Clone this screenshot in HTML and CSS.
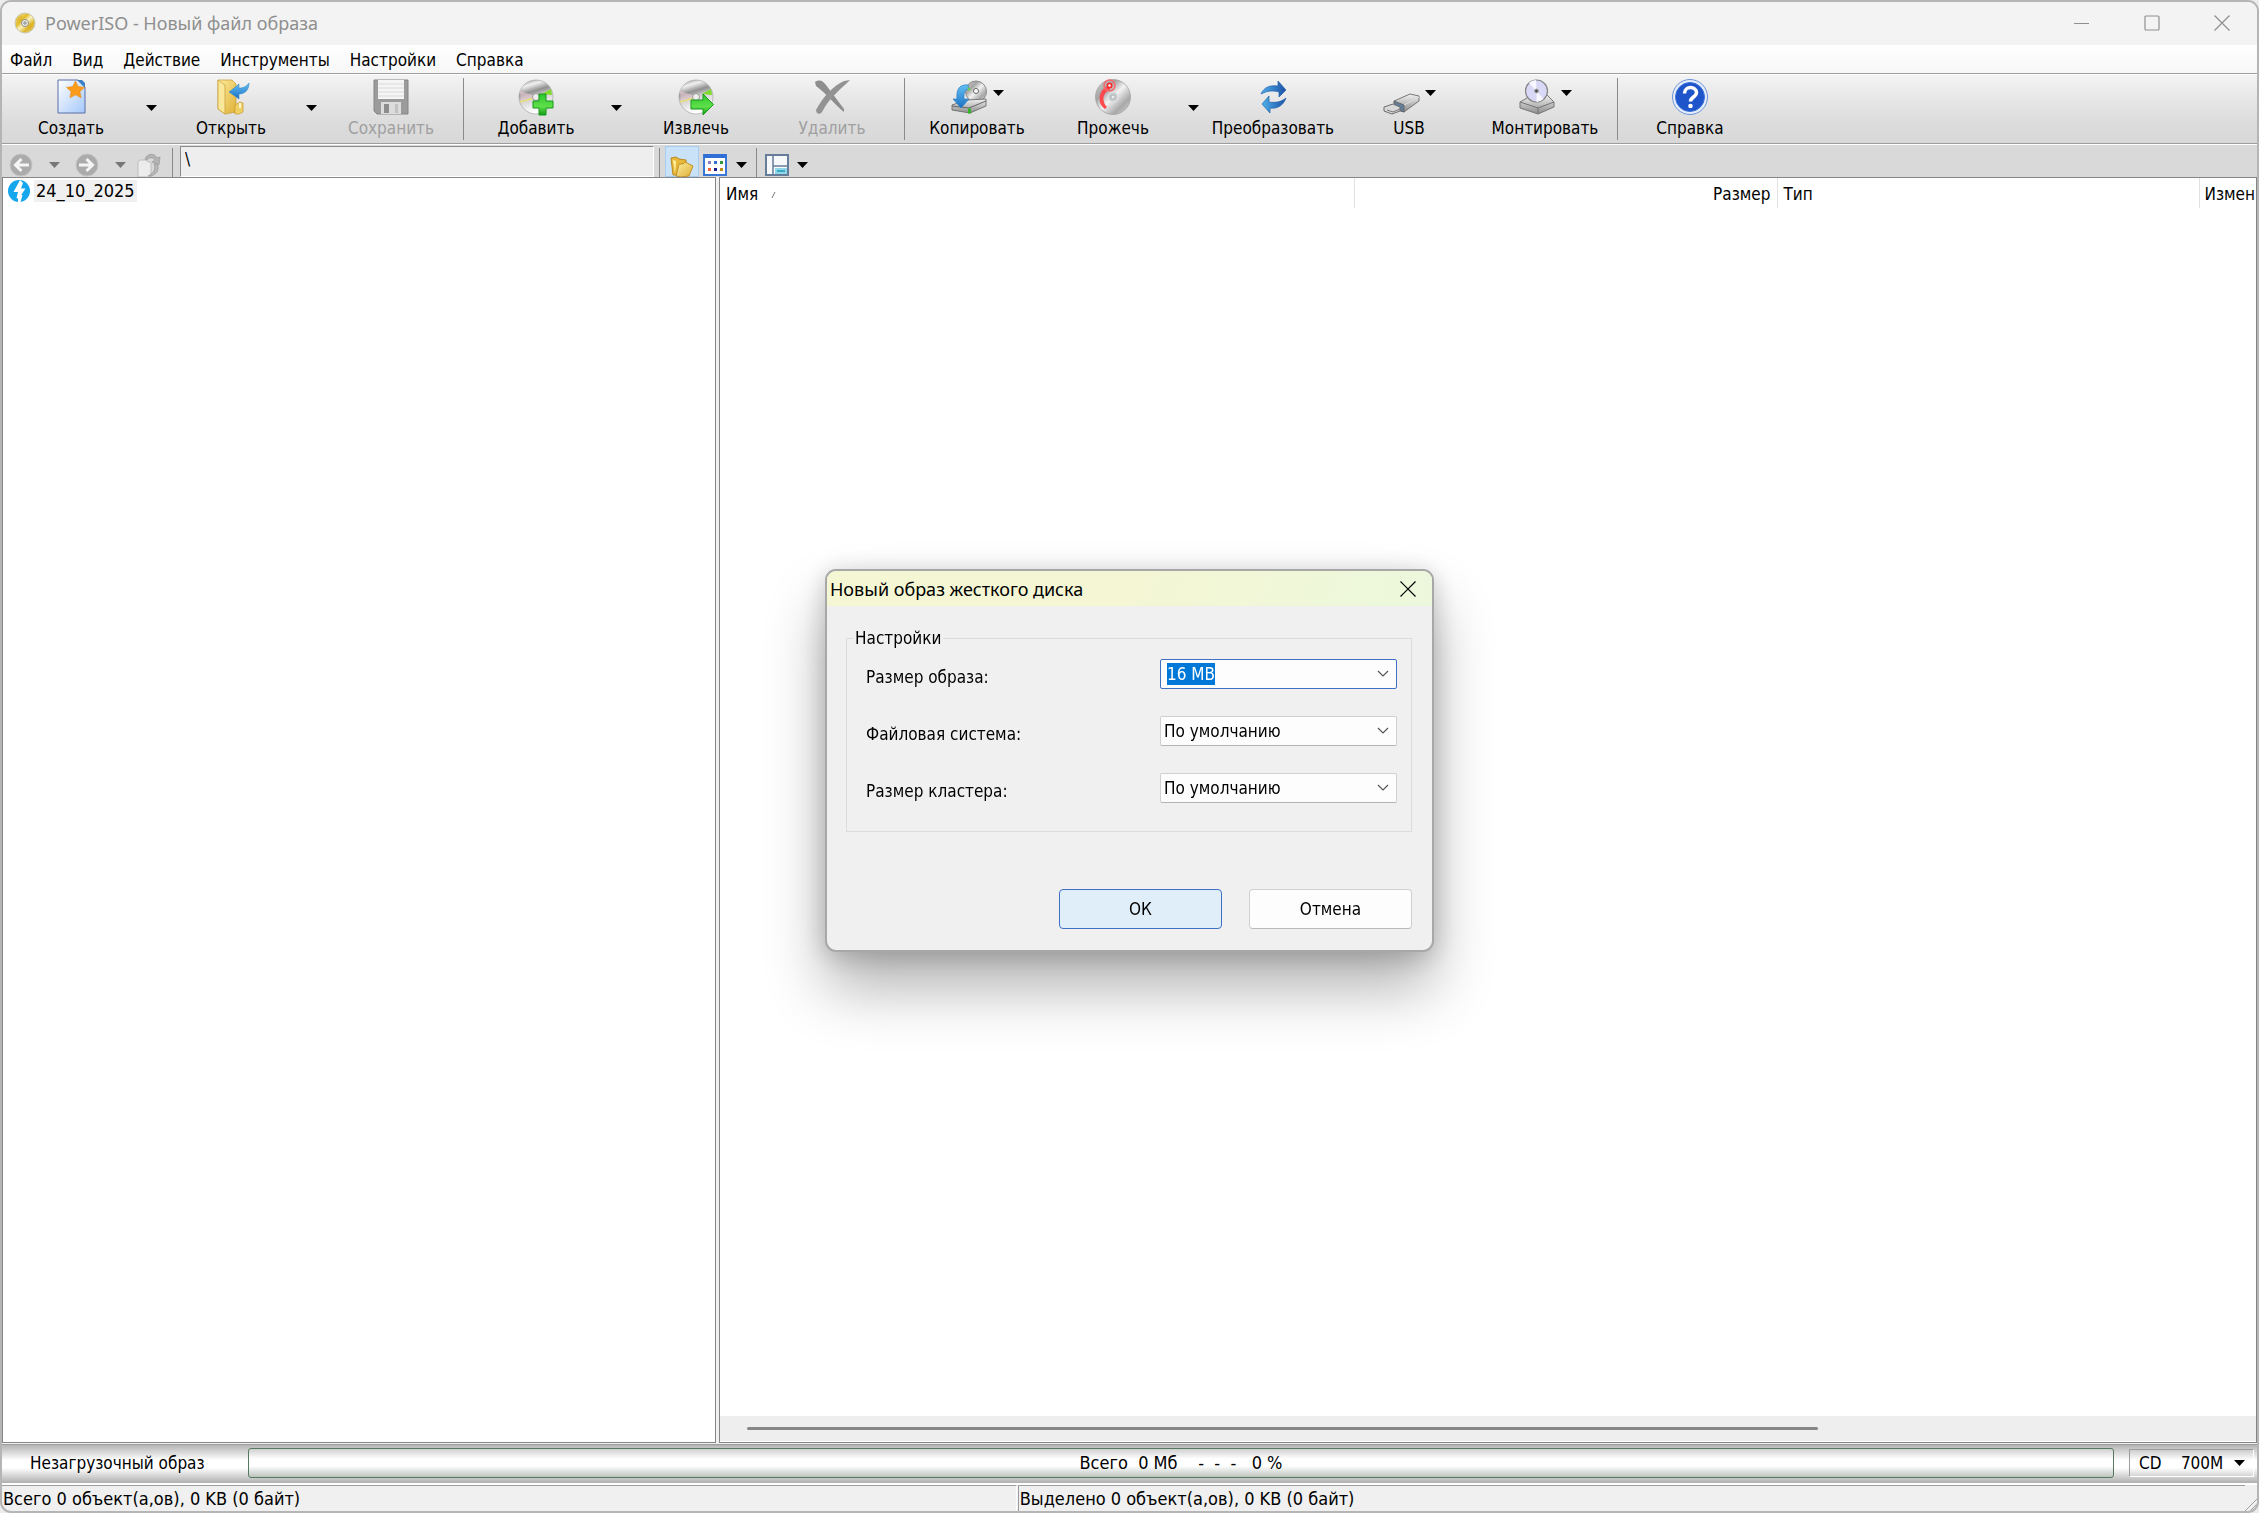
FILE: index.html
```html
<!DOCTYPE html>
<html lang="ru">
<head>
    <meta charset="UTF-8" />
    <meta name="viewport" content="width=device-width, initial-scale=1" />
    <title>PowerISO - Новый файл образа</title>
    <link rel="stylesheet" href="styles.css">
</head>
<body>
    <!-- Shared gradients and the small drop-down triangle -->
    <svg class="defs" aria-hidden="true">
        <defs>
            <linearGradient id="disc" x1="0" y1="0" x2="1" y2="1">
                <stop offset="0" stop-color="#d8d8d8" />
                <stop offset=".3" stop-color="#a4a4a4" />
                <stop offset=".5" stop-color="#f2f2f2" />
                <stop offset=".75" stop-color="#a8a8a8" />
                <stop offset="1" stop-color="#dcdcdc" />
            </linearGradient>
            <linearGradient id="cd" x1="0" y1="0" x2=".3" y2="1">
                <stop offset="0" stop-color="#8c8c8c" />
                <stop offset=".22" stop-color="#f0f0f0" />
                <stop offset=".42" stop-color="#909090" />
                <stop offset=".6" stop-color="#d6d2d4" />
                <stop offset="1" stop-color="#ffffff" />
            </linearGradient>
            <linearGradient id="gold" x1="0" y1="0" x2="1" y2="1">
                <stop offset="0" stop-color="#f4f0c8" />
                <stop offset=".35" stop-color="#e3bc2c" />
                <stop offset=".5" stop-color="#faf3c0" />
                <stop offset=".7" stop-color="#dcb52a" />
                <stop offset="1" stop-color="#f0ecd0" />
            </linearGradient>
            <linearGradient id="folder" x1="0" y1="0" x2="1" y2="1">
                <stop offset="0" stop-color="#fdeea0" />
                <stop offset="1" stop-color="#dfaf35" />
            </linearGradient>
            <linearGradient id="blue" x1="0" y1="0" x2="0" y2="1">
                <stop offset="0" stop-color="#63c0f5" />
                <stop offset="1" stop-color="#1a70c4" />
            </linearGradient>
            <linearGradient id="navy" x1="0" y1="0" x2="1" y2="0">
                <stop offset="0" stop-color="#4fb0ea" />
                <stop offset="1" stop-color="#1c50a6" />
            </linearGradient>
            <linearGradient id="page" x1="0" y1="0" x2="1" y2="1">
                <stop offset="0" stop-color="#ffffff" />
                <stop offset="1" stop-color="#a4c8fa" />
            </linearGradient>
            <linearGradient id="green" x1="0" y1="0" x2="0" y2="1">
                <stop offset="0" stop-color="#2cc42c" />
                <stop offset=".6" stop-color="#5fe04a" />
                <stop offset="1" stop-color="#139a17" />
            </linearGradient>
            <linearGradient id="metal" x1="0" y1="0" x2="0" y2="1">
                <stop offset="0" stop-color="#f2f2f2" />
                <stop offset="1" stop-color="#8b8b8b" />
            </linearGradient>
            <symbol id="tri" viewBox="0 0 11 6"><path d="M0 0h11L5.500 6z" fill="currentColor" /></symbol>
            <symbol id="chev" viewBox="0 0 12 8"><path d="M1 1l5 5 5-5" fill="none" stroke="currentColor" stroke-width="1.200" /></symbol>
        </defs>
    </svg>

    <div class="window">
        <header class="titlebar">
            <svg class="app-icon" viewBox="0 0 22 22">
                <circle cx="11" cy="11" r="10" fill="url(#gold)" stroke="#c9c7b4" />
                <path d="M2 8a10 10 0 0 1 5-5l3 5-4 3zM20 14a10 10 0 0 1-5 5l-3-5 4-3z" fill="#d9ad1c" opacity=".5" />
                <circle cx="11" cy="11" r="3.500" fill="#f1f1ee" stroke="#8e8e86" />
                <circle cx="11" cy="11" r="1.200" fill="#fff" stroke="#777" />
            </svg>
            <h1 class="title">PowerISO - Новый файл образа</h1>
            <div class="window-controls">
                <button aria-label="Свернуть"><svg viewBox="0 0 16 16"><path d="M0 8.500h15" /></svg></button>
                <button aria-label="Развернуть"><svg viewBox="0 0 16 16"><rect x="1" y="1" width="14" height="14" rx="1" /></svg></button>
                <button aria-label="Закрыть"><svg viewBox="0 0 16 16"><path d="M.5.5l15 15M15.500.5l-15 15" /></svg></button>
            </div>
        </header>

        <nav class="menubar">
            <button>Файл</button>
            <button>Вид</button>
            <button>Действие</button>
            <button>Инструменты</button>
            <button>Настройки</button>
            <button>Справка</button>
        </nav>

        <div class="toolbar">
            <button class="tool">
                <svg class="icon" viewBox="0 0 36 36">
                    <path d="M5 1h20l7 7v26H5z" fill="url(#page)" stroke="#5a6ea8" />
                    <path d="M24 1l8 8v-5l-3-3z" fill="#3b7fc4" />
                    <path d="M22.500 2l2.700 5.600 6.300.8-4.600 4.200 1.200 6.200-5.600-3-5.500 3 1.100-6.200-4.600-4.200 6.200-.8z" fill="#fb9b1b" stroke="#e98a10" stroke-width=".6" />
                </svg>
                Создать
            </button>
            <button class="drop" aria-label="Создать: варианты"><svg class="tri"><use href="#tri" /></svg></button>
            <button class="tool">
                <svg class="icon" viewBox="0 0 36 36">
                    <path d="M5 1l14 0 4 4v28l-11 2-7-5z" fill="url(#folder)" stroke="#c79a30" stroke-width=".7" />
                    <path d="M5 1l7 5v29l-7-5z" fill="#f9e79a" stroke="#c79a30" stroke-width=".7" />
                    <path d="M22 26l5-3 3 1v9l-4 2h-4z" fill="#f0cf62" stroke="#c79a30" stroke-width=".7" />
                    <path d="M27 24v5" stroke="#fff" stroke-width="1.500" />
                    <path d="M36 4c0 7-4 11-10 11v5L16 13l10-8v4c4 0 7-1 10-5z" fill="url(#blue)" stroke="#2c83bd" stroke-width=".5" />
                </svg>
                Открыть
            </button>
            <button class="drop" aria-label="Открыть: варианты"><svg class="tri"><use href="#tri" /></svg></button>
            <button class="tool" disabled>
                <svg class="icon" viewBox="0 0 36 36">
                    <path d="M1 1h34v34H4l-3-3z" fill="#9b9b9b" stroke="#858585" />
                    <path d="M5 1h26v19H5z" fill="#f5f5f5" />
                    <path d="M5 5h26M5 9h26M5 13h26M5 17h26" stroke="#d9d9d9" />
                    <path d="M8 23h20v12H8z" fill="#dcdcdc" />
                    <path d="M11 25h5v9h-5z" fill="#8d8d8d" />
                    <path d="M22 25h3v9h-3z" fill="#c1c1c1" />
                </svg>
                Сохранить
            </button>
            <span class="sep"></span>
            <button class="tool">
                <svg class="icon" viewBox="0 0 36 36">
                    <circle cx="18" cy="18" r="17" fill="url(#cd)" stroke="#a5a5a5" stroke-width=".7" />
                    <path d="M2 12l15 5-14 7z" fill="#e9cbd6" opacity=".6" />
                    <path d="M2 23l14-4" stroke="#e6e070" stroke-width="1.500" />
                    <path d="M33 10l-9 5 10 1z" fill="#7fdc2c" />
                    <circle cx="18" cy="18" r="3.500" fill="#eee" stroke="#999" />
                    <path d="M21 15h7v7h7v7h-7v7h-7v-7h-6v-7h6z" fill="url(#green)" stroke="#179a1c" />
                </svg>
                Добавить
            </button>
            <button class="drop" aria-label="Добавить: варианты"><svg class="tri"><use href="#tri" /></svg></button>
            <button class="tool">
                <svg class="icon" viewBox="0 0 36 36">
                    <circle cx="18" cy="18" r="17" fill="url(#cd)" stroke="#a5a5a5" stroke-width=".7" />
                    <path d="M2 12l15 5-14 7z" fill="#e9cbd6" opacity=".6" />
                    <path d="M2 23l14-4" stroke="#e6e070" stroke-width="1.500" />
                    <path d="M33 10l-9 5 10 1z" fill="#7fdc2c" />
                    <circle cx="18" cy="18" r="3.500" fill="#eee" stroke="#999" />
                    <path d="M13 21h12v-6l10.500 10.500L25 36v-6H13z" fill="url(#green)" stroke="#179a1c" />
                </svg>
                Извлечь
            </button>
            <button class="tool" disabled>
                <svg class="icon" viewBox="0 0 36 36">
                    <path d="M1 3c5-3 8-1 11 3l18 24v3C22 27 13 15 2 7z" fill="#8e8e8e" />
                    <path d="M36 1C26 11 16 18 8 33c-2 3-6 2-6-2C8 19 20 6 30 2z" fill="#939393" />
                </svg>
                Удалить
            </button>
            <span class="sep"></span>
            <button class="tool">
                <span class="icon-row">
                    <svg class="icon" viewBox="0 0 36 36">
                        <circle cx="25" cy="12.500" r="10.500" fill="url(#disc)" stroke="#8a8a8a" />
                        <circle cx="25" cy="12" r="2.500" fill="#fff" stroke="#666" />
                        <path d="M1 26l15-5 19-1v7l-16 7-18-3z" fill="url(#metal)" stroke="#777" />
                        <path d="M1 27l17 2 17-7" fill="none" stroke="#666" />
                        <path d="M17 29.500h3v5h-3z" fill="#35b527" />
                        <path d="M17 6C9 5 5 10 6 20H2l8 9 8-9h-5c0-6 0-9 5-10z" fill="url(#blue)" stroke="#2f7fc0" stroke-width=".7" />
                        <path d="M16 8l4 2-2 2z" fill="#62d343" />
                    </svg>
                    <svg class="tri"><use href="#tri" /></svg>
                </span>
                Копировать
            </button>
            <button class="tool">
                <svg class="icon" viewBox="0 0 36 36">
                    <circle cx="18" cy="18" r="17.500" fill="url(#disc)" stroke="#a2a2a2" stroke-width=".8" />
                    <circle cx="18" cy="18" r="5" fill="#c6cdd1" stroke="#e8e8e8" />
                    <circle cx="18" cy="18" r="2" fill="#eee" stroke="#999" stroke-width=".6" />
                    <path d="M14 7C4 9 1 24 10 30l2-2C6 22 8 13 15 11z" fill="#fb4a4d" />
                    <circle cx="14.500" cy="6.500" r="5.500" fill="none" stroke="#f86a6c" stroke-width="1.500" />
                    <circle cx="14.500" cy="6.500" r="3" fill="#fb2b2e" />
                    <circle cx="14.500" cy="6.500" r="1.200" fill="#fff" />
                </svg>
                Прожечь
            </button>
            <button class="drop" aria-label="Прожечь: варианты"><svg class="tri"><use href="#tri" /></svg></button>
            <button class="tool">
                <svg class="icon" viewBox="0 0 36 36">
                    <path d="M6 15C9 8 15 6 23 7V2l8 9-7 7v-5c-7-2-12-1-18 2z" fill="url(#navy)" stroke="#2262ac" stroke-width=".7" />
                    <path d="M31 19c-3 8-9 11-16 10v5l-8-9 7-8v6c7 1 12 0 17-4z" fill="url(#navy)" stroke="#2262ac" stroke-width=".7" />
                </svg>
                Преобразовать
            </button>
            <button class="tool">
                <span class="icon-row">
                    <svg class="icon" viewBox="0 0 36 36">
                        <path d="M11 22L27 15l9 2v5l-15 11-9-3z" fill="url(#metal)" stroke="#777" />
                        <path d="M12 23l9 3 15-8" fill="none" stroke="#dedede" />
                        <path d="M11 22l10 4v7l-9-3z" fill="#5f7f9c" stroke="#666" />
                        <path d="M1 28l9-3 7 3v4l-8 3-8-3z" fill="#d9d9d9" stroke="#6d6d6d" />
                        <path d="M4 31l6 2 7-3" fill="none" stroke="#777" />
                    </svg>
                    <svg class="tri"><use href="#tri" /></svg>
                </span>
                USB
            </button>
            <button class="tool">
                <span class="icon-row">
                    <svg class="icon" viewBox="0 0 36 36">
                        <path d="M1 23l12-7h15l7 7v5L19 35 1 29z" fill="url(#metal)" stroke="#777" />
                        <path d="M1 23l18 6 16-6M19 29v6" fill="none" stroke="#747474" />
                        <circle cx="17.500" cy="12" r="11" fill="#d9d8f6" stroke="#858585" stroke-width="1.200" />
                        <path d="M17.500 12L10 4a11 11 0 0 1 7-3zM17.500 12l7 8a11 11 0 0 1-7 3z" fill="#f7f7ff" />
                        <circle cx="17.500" cy="12" r="2" fill="#555" stroke="#aaa" />
                    </svg>
                    <svg class="tri"><use href="#tri" /></svg>
                </span>
                Монтировать
            </button>
            <span class="sep"></span>
            <button class="tool">
                <svg class="icon" viewBox="0 0 36 36">
                    <circle cx="18" cy="18" r="17.500" fill="#e6eefb" stroke="#6c93d6" />
                    <circle cx="18" cy="18" r="14.500" fill="#1f55cb" stroke="#3c74d8" />
                    <path d="M12.500 14.500c0-8 12-7.500 12-1 0 4.500-6 4.500-6 9" fill="none" stroke="#fff" stroke-width="3.500" />
                    <circle cx="18.500" cy="27" r="2.300" fill="#fff" />
                </svg>
                Справка
            </button>
        </div>

        <div class="navbar">
            <button class="nav-btn" aria-label="Назад" disabled>
                <svg viewBox="0 0 24 24"><circle cx="12" cy="12" r="11" fill="#ababab" stroke="#c4c4c4" /><path d="M20 12H7m5.500-6l-6 6 6 6" fill="none" stroke="#f5f5f5" stroke-width="3" /></svg>
            </button>
            <button class="nav-drop" aria-label="История назад" disabled><svg class="tri"><use href="#tri" /></svg></button>
            <button class="nav-btn" aria-label="Вперёд" disabled>
                <svg viewBox="0 0 24 24"><circle cx="12" cy="12" r="11" fill="#ababab" stroke="#c4c4c4" /><path d="M4 12h13m-5.500-6l6 6-6 6" fill="none" stroke="#f5f5f5" stroke-width="3" /></svg>
            </button>
            <button class="nav-drop" aria-label="История вперёд" disabled><svg class="tri"><use href="#tri" /></svg></button>
            <button class="nav-btn small" aria-label="Вверх" disabled>
                <svg viewBox="0 0 24 24"><path d="M1 9l2-2h6l2 2h3v15H1z" fill="#ececec" stroke="#bdbdbd" /><path d="M8 6c2-5 9-7 12-1l3-1-1 8-7-3 3-2c-2-3-6-3-8 0z" fill="#b4b4b4" stroke="#989898" stroke-width=".7" /><path d="M20 11c3 5 0 10-6 12h-3c6-3 8-7 6-12z" fill="#b8b8b8" stroke="#989898" stroke-width=".7" /></svg>
            </button>
            <span class="sep wide"></span>
            <input class="path" type="text" aria-label="Путь" value="\" />
            <span class="sep"></span>
            <button class="nav-btn toggle" aria-label="Папки" aria-pressed="true">
                <svg viewBox="0 0 24 24"><path d="M1 3l5-1 3 2 7 1v15H3z" fill="#e9b93a" stroke="#b98a1e" /><path d="M6 21l3-12h4l2-2 8 4-4 10-8 1z" fill="url(#folder)" stroke="#bf9128" /><path d="M3 5l3 1-1 12z" fill="#fff0a4" /></svg>
            </button>
            <button class="nav-btn" aria-label="Вид списка">
                <svg viewBox="0 0 24 24"><rect x="1" y="2" width="22" height="20" fill="#fff" stroke="#3a77d4" stroke-width="2" /><path d="M1 1h22v4H1z" fill="#2f6fd6" /><path d="M5 8h3v3H5z" fill="#8a7fc0" /><path d="M11 8h3v3h-3z" fill="#2f6fd0" /><path d="M17 8h3v3h-3z" fill="#2d9a36" /><path d="M5 15h3v3H5z" fill="#f0623c" /><path d="M11 15h3v3h-3z" fill="#151a8c" /><path d="M17 15h3v3h-3z" fill="#c08a18" /></svg>
            </button>
            <button class="nav-drop small" aria-label="Варианты вида"><svg class="tri"><use href="#tri" /></svg></button>
            <span class="sep"></span>
            <button class="nav-btn small" aria-label="Панели">
                <svg viewBox="0 0 24 24"><rect x="1" y="2" width="22" height="20" fill="#f6f8fa" stroke="#667d99" stroke-width="2" /><path d="M8 2v20M8 13h15" stroke="#667d99" stroke-width="1.500" /><path d="M10 15h12v6H10z" fill="#8ed8ea" /><path d="M12 18h8" stroke="#3fa7c6" stroke-width="2" /></svg>
            </button>
            <button class="nav-drop small" aria-label="Варианты панелей"><svg class="tri"><use href="#tri" /></svg></button>
        </div>

        <main class="panes">
            <section class="pane tree">
                <button class="tree-item">
                    <svg viewBox="0 0 22 22"><circle cx="11" cy="11" r="11" fill="#14a7ee" /><path d="M12 0L5.500 12H10L8.500 18l2 1L17.500 8.500H13L15 3z" fill="#fff" /><path d="M12.500 22l2-7h-1.500l-3 4v3z" fill="#fff" /></svg>
                    <span>24_10_2025</span>
                </button>
            </section>
            <section class="pane files">
                <table class="file-table">
                    <thead>
                        <tr>
                            <th class="col-name">Имя <svg class="sort" viewBox="0 0 6 8"><path d="M1 7l3-6" stroke="#777" fill="none" /></svg></th>
                            <th class="col-size">Размер</th>
                            <th class="col-type">Тип</th>
                            <th class="col-date">Измен</th>
                        </tr>
                    </thead>
                </table>
                <div class="scrollbar"><div class="thumb"></div></div>
            </section>
        </main>

        <div class="infobar">
            <span class="boot">Незагрузочный образ</span>
            <div class="capacity">Всего  0 Мб    -  -  -   0 %</div>
            <div class="media">
                <select aria-label="Тип носителя">
                    <option>CD&nbsp;&nbsp;&nbsp; 700M</option>
                </select>
                <svg class="tri"><use href="#tri" /></svg>
            </div>
        </div>

        <footer class="statusbar">
            <div class="status total">Всего 0 объект(а,ов), 0 KB (0 байт)</div>
            <div class="status selected">Выделено 0 объект(а,ов), 0 KB (0 байт)</div>
            <svg class="grip" viewBox="0 0 12 12"><path d="M0 12L12 0M5 12l7-7" stroke="#a0a0a0" fill="none" /></svg>
        </footer>
    </div>

    <!-- New hard disk image dialog -->
    <div class="overlay">
        <form class="dialog" role="dialog" aria-labelledby="dialog-title">
            <div class="dialog-title">
                <h2 id="dialog-title">Новый образ жесткого диска</h2>
                <button type="button" aria-label="Закрыть"><svg viewBox="0 0 16 16"><path d="M.5.5l15 15M15.500.5l-15 15" /></svg></button>
            </div>
            <div class="dialog-body">
                <fieldset>
                    <legend>Настройки</legend>
                    <div class="field">
                        <label for="size">Размер образа:</label>
                        <div class="combo focused">
                            <input type="text" id="size" value="16 MB" />
                            <svg class="chev"><use href="#chev" /></svg>
                        </div>
                    </div>
                    <div class="field">
                        <label for="fs">Файловая система:</label>
                        <div class="combo">
                            <select id="fs"><option>По умолчанию</option></select>
                            <svg class="chev"><use href="#chev" /></svg>
                        </div>
                    </div>
                    <div class="field">
                        <label for="cluster">Размер кластера:</label>
                        <div class="combo">
                            <select id="cluster"><option>По умолчанию</option></select>
                            <svg class="chev"><use href="#chev" /></svg>
                        </div>
                    </div>
                </fieldset>
                <div class="actions">
                    <button type="button" class="primary">ОК</button>
                    <button type="button">Отмена</button>
                </div>
            </div>
        </form>
    </div>
    <script>
        const size = document.getElementById('size');
        size.focus();
        size.select();
    </script>
</body>
</html>
```
FILE: styles.css
```css
* {
box-sizing: border-box;
}
body {
margin: 0;
background: #ececec;
color: #000;
font: 17px/22px "DejaVu Sans Condensed", "DejaVu Sans", sans-serif;
}
button, input, select {
font: inherit;
color: inherit;
margin: 0;
padding: 0;
border: none;
border-radius: 0;
background: none;
outline: none;
}
select {
appearance: none;
}
svg {
display: block;
flex: none;
}
.defs {
position: absolute;
width: 0;
height: 0;
}
.tri {
width: 11px;
height: 6px;
}
.window {
display: flex;
flex-direction: column;
height: 100vh;
overflow: hidden;
border: 2px solid #b5b5b5;
border-radius: 11px;
background: #f0f0f0;
}

/* Title bar */
.titlebar {
display: flex;
align-items: center;
height: 43px;
padding: 0 0 2px 12px;
background: #f3f3f3;
color: #8f8f8f;
}
.app-icon {
width: 22px;
height: 22px;
}
.title {
margin: 0 auto 0 9px;
font: 18px/24px "Noto Sans", sans-serif;
}
.window-controls {
display: flex;
}
.window-controls button {
display: grid;
place-items: center;
width: 70px;
height: 41px;
}
.window-controls svg, .dialog-title svg {
width: 16px;
height: 16px;
fill: none;
stroke: currentColor;
stroke-width: 1.2;
}

/* Menu */
.menubar {
display: flex;
gap: 20px;
height: 29px;
padding: 1px 0 0 8px;
border-bottom: 1px solid #9d9d9d;
background: linear-gradient(#fff, #f7f7f7);
}

/* Main toolbar */
.toolbar {
display: flex;
height: 70px;
padding-left: 1px;
border-top: 1px solid #fff;
border-bottom: 1px solid #9d9d9d;
background: linear-gradient(#f3f3f3, #dcdcdc 70%, #d8d8d8);
}
.tool {
display: flex;
flex-direction: column;
align-items: center;
gap: 2px;
width: 136px;
padding-top: 4px;
white-space: nowrap;
}
.tool:disabled {
color: #a0a0a0;
}
.icon {
width: 36px;
height: 36px;
overflow: visible;
}
.icon-row {
display: flex;
gap: 6px;
}
.icon-row .tri {
margin-top: 11px;
}
.drop {
display: grid;
place-items: center;
width: 24px;
padding-bottom: 2px;
}
.sep {
width: 11px;
margin-top: 3px;
background: linear-gradient(#8a8a8a, #8a8a8a) center / 1px 100% no-repeat;
}
.sep.wide {
width: 16px;
}
.toolbar .sep {
width: 9px;
margin-bottom: 3px;
}

/* Navigation bar */
.navbar {
display: flex;
height: 33px;
overflow: hidden;
border-top: 1px solid #fff;
background: #d9d9d9;
}
.nav-btn {
display: flex;
justify-content: center;
width: 38px;
padding-top: 8px;
}
.nav-btn svg {
width: 24px;
height: 24px;
}
.nav-btn.small {
width: 30px;
}
.nav-btn.toggle {
width: 34px;
margin-top: 1px;
border: 1px solid #a6cdf0;
background: #c9e2f8;
}
.toggle + .nav-btn {
width: 32px;
}
.nav-drop {
display: flex;
justify-content: center;
width: 28px;
padding-top: 17px;
}
.nav-drop.small {
width: 20px;
}
.nav-drop:disabled {
color: #777;
}
.path {
width: 474px;
height: 31px;
margin-top: 1px;
padding: 0 4px 6px;
border: 1px solid #fff;
border-top: 1px solid #8a8a8a;
border-left: 1px solid #8a8a8a;
background: #eee;
}

/* Panes */
.panes {
display: grid;
grid-template-columns: 714px 1fr;
gap: 3px;
flex: 1;
min-height: 0;
}
.pane {
min-width: 0;
overflow: hidden;
border: 1px solid #868686;
background: #fff;
}
.tree-item {
display: flex;
align-items: center;
gap: 4px;
padding: 2px 5px;
font-size: 18px;
}
.tree-item svg {
width: 22px;
height: 22px;
}
.tree-item span {
padding: 0 2px;
background: #f0f0f0;
}
.files {
display: flex;
flex-direction: column;
justify-content: space-between;
}
.file-table {
width: 100%;
table-layout: fixed;
border-collapse: collapse;
}
.file-table th {
height: 30px;
padding: 1px 6px 0;
border-right: 1px solid #e2e2e2;
font-weight: normal;
text-align: left;
white-space: nowrap;
}
.file-table .col-name {
width: 634px;
}
.file-table .col-size {
width: 423px;
text-align: right;
}
.file-table .col-type {
width: 422px;
}
.file-table .col-date {
border-right: none;
padding: 1px 0 0 5px;
}
.sort {
display: inline-block;
width: 6px;
height: 8px;
margin-left: 8px;
vertical-align: middle;
}
.scrollbar {
height: 26px;
padding: 11px 0 0 27px;
border-bottom: 1px solid #fff;
background: #eee;
}
.thumb {
width: 71%;
height: 3px;
border-radius: 2px;
background: #868686;
}

/* Bottom bars */
.infobar {
display: flex;
align-items: center;
height: 41px;
padding-bottom: 2px;
margin-top: 1px;
border-top: 1px solid #9d9d9d;
border-bottom: 2px solid #fff;
background: linear-gradient(#b4b4b4, #fff 40%, #fff 60%, #b0b0b0);
}
.boot {
width: 246px;
padding-left: 28px;
}
.capacity {
flex: 1;
height: 30px;
font-size: 18px;
line-height: 28px;
border: 1px solid #55795f;
border-radius: 3px;
background: linear-gradient(#d0d0d0, #fff 35%, #fff 60%, #bcc4be);
text-align: center;
white-space: pre;
}
.media {
display: flex;
align-items: center;
width: 125px;
height: 28px;
margin: 0 3px 0 15px;
padding-left: 9px;
border: 1px solid #fff;
border-top: 1px solid #9d9d9d;
border-left: 1px solid #9d9d9d;
}
.media select {
width: 95px;
}
.statusbar {
display: flex;
height: 26px;
font-size: 18px;
}
.status {
padding: 2px 1px 0;
border-top: 1px solid #9d9d9d;
}
.total {
width: 45%;
margin-right: 1px;
border-right: 1px solid #fff;
}
.selected {
flex: 1;
border-left: 1px solid #9d9d9d;
}
.grip {
align-self: flex-end;
width: 12px;
height: 12px;
}

/* Dialog */
.overlay {
position: fixed;
inset: 0;
display: grid;
place-items: center;
padding-top: 8px;
}
.dialog {
width: 609px;
overflow: hidden;
border: 2px solid #a8a8a8;
border-radius: 11px;
background: #f0f0f0;
box-shadow: 0 36px 60px rgba(0,0,0,0.3), 0 4px 26px rgba(0,0,0,0.2);
}
.dialog-title {
display: flex;
align-items: center;
justify-content: space-between;
height: 35px;
padding: 0 16px 0 3px;
background: linear-gradient(100deg, #f4f6d4 50%, #ecf8dc);
}
.dialog-title h2 {
margin: 0;
font: 18px/24px "Noto Sans", sans-serif;
}
.dialog-body {
padding: 21px 20px 21px 19px;
}
fieldset {
margin: 0;
padding: 10px 14px 28px 19px;
border: 1px solid #dcdcdc;
}
legend {
margin-left: -13px;
padding: 0 2px;
}
.field {
display: flex;
justify-content: space-between;
height: 57px;
}
.field:last-child {
height: 30px;
}
.field label {
padding-top: 7px;
}
.combo {
display: grid;
align-items: center;
width: 237px;
height: 30px;
border: 1px solid #d0d0d0;
border-bottom-color: #b4b4b4;
border-radius: 2px;
background: #fdfdfd;
}
.combo.focused {
border-color: #3f70c4;
}
.combo select, .combo input, .chev {
grid-area: 1 / 1;
}
.combo select {
padding-left: 3px;
}
.combo input {
width: 200px;
height: 22px;
padding-left: 6px;
}
.combo input::selection {
background: #0078d7;
color: #fff;
}
.chev {
justify-self: end;
width: 12px;
height: 8px;
margin-right: 7px;
color: #555;
pointer-events: none;
}
.actions {
display: flex;
justify-content: flex-end;
gap: 27px;
margin-top: 57px;
}
.actions button {
width: 163px;
height: 40px;
border: 1px solid #d0d0d0;
border-bottom-color: #bababa;
border-radius: 4px;
background: #fdfdfd;
}
.actions .primary {
border-color: #3f70c4;
background: #e0eef9;
}
```
